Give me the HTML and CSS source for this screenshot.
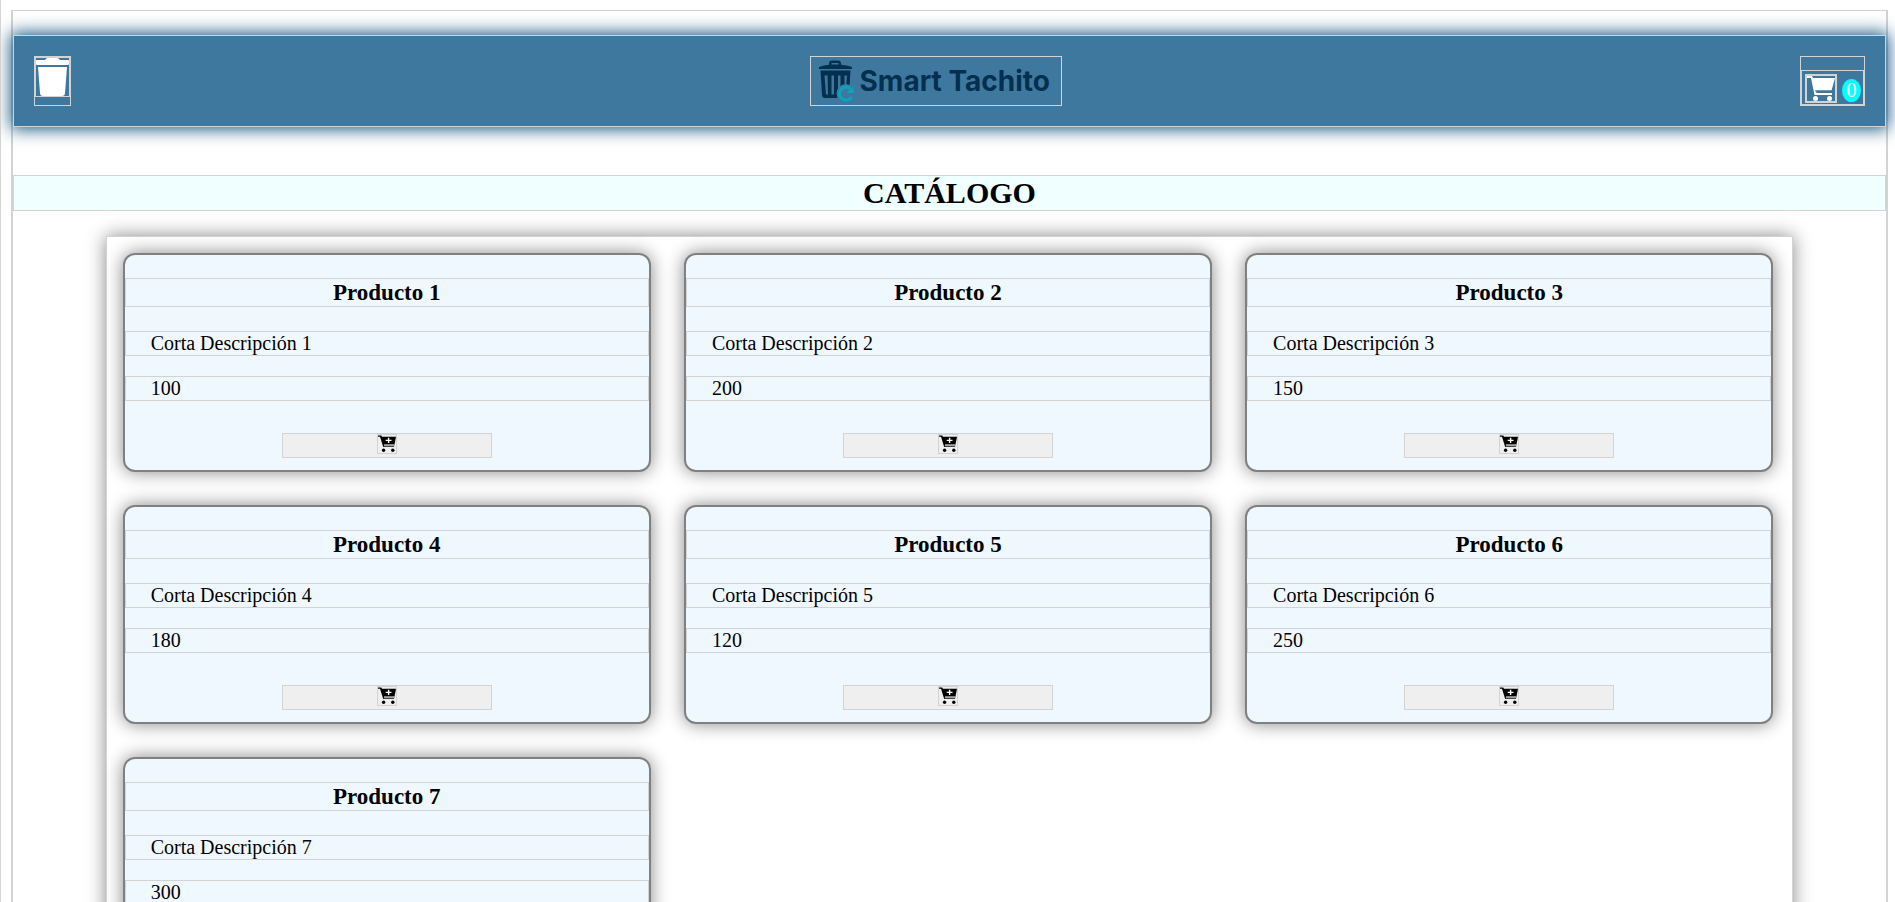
FILE: index.html
```html
<!DOCTYPE html>
<html lang="es">
<head>
<meta charset="utf-8">
<title>Smart Tachito</title>
<link rel="stylesheet" href="styles.css">
</head>
<body>
<svg class="sprite" aria-hidden="true">
  <symbol id="cart-plus" viewBox="0 0 18 17">
    <path fill="currentColor" d="M0 0h3.200l.8 1.200H18l-1.500 7.800H6l.4 1H16v1.500H5.200L2 1.300H0z"/>
    <path fill="#444" d="M6 9h10.500l-.5 2.500H5.500z"/>
    <path fill="#fff" d="M6 9.200h10v.8H6zM9.900 2.200h1.400v2h2.200v1.400h-2.200v2H9.900v-2H7.700V4.200h2.200z"/>
    <circle fill="currentColor" cx="5.600" cy="14.800" r="1.700"/><circle fill="currentColor" cx="14.800" cy="14.800" r="1.700"/>
  </symbol>
</svg>
<div class="page">
  <header class="header">
    <a class="home" href="#" aria-label="Inicio">
      <svg class="bin" viewBox="0 0 33 38"><path fill="#fff" d="M0 3Q0 2 1 2h8q1-2 3-2h9q2 0 3 2h8q1 0 1 1v3q0 1-1 1H1Q0 7 0 6zM2 9h29l-2 26q0 3-3 3H7q-3 0-3-3z"/></svg>
    </a>
    <div class="logo">
      <svg class="logo-mark" viewBox="0 0 36 42">
        <path fill="#04304f" d="M1 7q5-2 10-2.300V3.500Q11 .5 14 .5h6q3 0 3 3v1.200Q29 5 34 7v2H1zM13.500 4.500h7V3h-7z"/>
        <path fill="#04304f" fill-rule="evenodd" d="M2.500 10.500h30L31 35q-.2 3-3 3H7q-2.800 0-3-3zM6.500 15.500 8 34.500h2L9.500 15.500zM13.500 15.500v19h2.500v-19zM20 15.500v19h2.500v-19zM26.500 15.500v14h1.500l1-14z"/>
        <circle cx="28" cy="33.500" r="9.500" fill="#3e789f"/>
        <path fill="none" stroke="#0aa5ba" stroke-width="3" d="M33.500 37A6.500 6.500 0 1 1 32 28.500"/>
        <path fill="#0aa5ba" d="M35.500 26v7h-7z"/>
      </svg>
      <span>Smart Tachito</span>
    </div>
    <a class="cart" href="#" aria-label="Carrito">
      <span class="cart-body">
        <svg class="cart-icon" viewBox="0 0 28 25"><path fill="#fff" d="M0 0h5l1 2h22l-3.500 12.500H9L9.500 17H25v2H7.500L4 2H0z"/><path stroke="#3e789f" d="M8 15h17"/><circle cx="8.500" cy="22.500" r="2.500" fill="#fff"/><circle cx="22.500" cy="22.500" r="2.500" fill="#fff"/></svg>
        <span class="badge">0</span>
      </span>
    </a>
  </header>
  <h1 class="title">CATÁLOGO</h1>
  <main class="catalog">
    <article class="card"><h2>Producto 1</h2><p>Corta Descripción 1</p><p>100</p><button type="button" aria-label="Agregar Producto 1"><svg><use href="#cart-plus"/></svg></button></article>
    <article class="card"><h2>Producto 2</h2><p>Corta Descripción 2</p><p>200</p><button type="button" aria-label="Agregar Producto 2"><svg><use href="#cart-plus"/></svg></button></article>
    <article class="card"><h2>Producto 3</h2><p>Corta Descripción 3</p><p>150</p><button type="button" aria-label="Agregar Producto 3"><svg><use href="#cart-plus"/></svg></button></article>
    <article class="card"><h2>Producto 4</h2><p>Corta Descripción 4</p><p>180</p><button type="button" aria-label="Agregar Producto 4"><svg><use href="#cart-plus"/></svg></button></article>
    <article class="card"><h2>Producto 5</h2><p>Corta Descripción 5</p><p>120</p><button type="button" aria-label="Agregar Producto 5"><svg><use href="#cart-plus"/></svg></button></article>
    <article class="card"><h2>Producto 6</h2><p>Corta Descripción 6</p><p>250</p><button type="button" aria-label="Agregar Producto 6"><svg><use href="#cart-plus"/></svg></button></article>
    <article class="card"><h2>Producto 7</h2><p>Corta Descripción 7</p><p>300</p><button type="button" aria-label="Agregar Producto 7"><svg><use href="#cart-plus"/></svg></button></article>
  </main>
</div>
</body>
</html>
```
FILE: styles.css
```css
* { box-sizing: border-box; }
html { border-left: 1px solid lightgray; background: #fff; }
body {
  margin: 0;
  padding: 10px 7px 10px 10px;
  font: 20px/23px "Liberation Serif", "Times New Roman", serif;
  color: #000;
}
.sprite { display: none; }
.page {
  border: 2px solid lightgray;
  border-top-width: 1px;
  padding-bottom: 24px;
}
.header {
  display: flex;
  justify-content: space-between;
  align-items: stretch;
  position: relative;
  margin-top: 24px;
  padding: 20px;
  border: 1px solid lightgray;
  background: #3e789f;
  box-shadow: 0 0 16px 2px #14557f;
}
.home {
  width: 37px;
  height: 50px;
  border: 1px solid lightgray;
}
.bin {
  display: block;
  width: 35px;
  height: 40px;
  border: 1px solid lightgray;
}
.logo {
  display: flex;
  align-items: center;
  gap: 6px;
  width: 252px;
  padding-left: 7px;
  border: 1px solid lightgray;
  font: 700 28px/32px Inter, sans-serif;
  color: #04304f;
  white-space: nowrap;
}
.logo-mark { width: 36px; height: 42px; flex: none; }
.cart {
  display: flex;
  align-items: flex-end;
  border: 1px solid lightgray;
  color: #fff;
  text-decoration: none;
}
.cart-body {
  display: flex;
  align-items: center;
  gap: 5px;
  height: 35px;
  padding: 0 2px 0 3px;
  border: 1px solid lightgray;
}
.cart-icon {
  width: 32px;
  height: 29px;
  margin-top: 2px;
  border: 2px solid lightgray;
}
.badge {
  width: 19px;
  margin-top: 6px;
  border-radius: 50%;
  background: aqua;
  text-align: center;
}
.title {
  margin: 48px 0 25px;
  border: 1px solid lightgray;
  background: #f0ffff;
  font-size: 30px;
  line-height: 34px;
  text-align: center;
}
.catalog {
  display: grid;
  grid-template-columns: repeat(3, 1fr);
  gap: 33px;
  width: calc(90% + 2px);
  margin: 0 auto;
  padding: 16px 19px 16px 16px;
  border: 1px solid lightgray;
  box-shadow: 0 0 18px #888;
}
.card {
  display: flex;
  flex-direction: column;
  padding-bottom: 12px;
  border: 2px solid gray;
  border-radius: 12px;
  background: aliceblue;
  box-shadow: 0 0 18px #888;
}
.card h2 {
  margin: 23px 0 24px;
  border: 1px solid lightgray;
  font-size: 23px;
  line-height: 27px;
  text-align: center;
}
.card p {
  margin: 0 0 20px;
  padding-left: 25px;
  border: 1px solid lightgray;
}
.card button {
  display: flex;
  justify-content: center;
  align-items: flex-start;
  align-self: center;
  width: 40%;
  height: 25px;
  margin-top: 12px;
  padding: 0;
  border: 1px solid lightgray;
  background: #efefef;
  color: #000;
}
.card button svg {
  width: 20px;
  height: 20px;
  border: 1px solid lightgray;
}
```
